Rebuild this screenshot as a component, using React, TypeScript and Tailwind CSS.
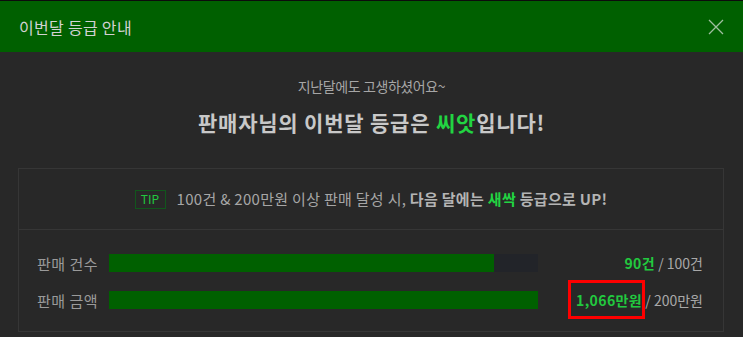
const font = { fontFamily: '"Noto Sans CJK KR", "Noto Sans", sans-serif' }

function ProgressRow({ label, pct, value, total, highlight }: { label: string; pct: number; value: string; total: string; highlight?: boolean }) {
  return (
    <div className="flex items-center h-[18px]">
      <div className="w-[72px] shrink-0 text-[15px] leading-none text-[#9a9a9a] tracking-[0.5px]">{label}</div>
      <div className="w-[429px] h-[18px] shrink-0 bg-[#222429]">
        <div className="h-full bg-[#006000]" style={{ width: `${pct}%` }} />
      </div>
      <div className="flex-1 text-right text-[14px] leading-none text-[#a8a8a8] whitespace-nowrap">
        <span className="relative font-bold text-[#22c93f] tracking-[0.4px]">
          {value}
          {highlight && <span className="absolute -left-[8px] -right-[3px] -top-[10px] -bottom-[9px] border-[3px] border-[#ff0000]" />}
        </span>
        <span> / {total}</span>
      </div>
    </div>
  )
}

export default function App() {
  return (
    <div className="w-[743px] h-[337px] overflow-hidden bg-[#282828] border-t border-[#0c0c0c]" style={font}>
      <div className="h-[51px] bg-[#006000] flex items-center justify-between pl-[19px] pr-[18px]">
        <span className="text-[16px] text-[#d2d2d2] tracking-[0.3px]">이번달 등급 안내</span>
        <svg width="16" height="16" viewBox="0 0 16 16" className="mr-[1px]">
          <path d="M1 1L15 15M15 1L1 15" stroke="#9fbf9f" strokeWidth="1.3" />
        </svg>
      </div>
      <div className="flex flex-col items-center pt-[25px]">
        <div className="text-[14px] leading-[18px] text-[#a6a6a6] tracking-[-0.4px]">지난달에도 고생하셨어요~</div>
        <div className="mt-[14px] text-[21px] leading-[26px] font-bold text-[#c8c8c8] tracking-[0.8px]">
          판매자님의 이번달 등급은 <span className="text-[#22d442]">씨앗</span>입니다!
        </div>
      </div>
      <div className="mx-[18px] mt-[33px] w-[706px] border border-[#363636]">
        <div className="h-[61px] flex items-center justify-center gap-[11px] border-b border-[#363636]">
          <span className="w-[31px] h-[19px] flex items-center justify-center border border-[#11561c] text-[12px] text-[#22c93f]">TIP</span>
          <span className="text-[15px] text-[#a6a6a6] tracking-[0.3px]">
            100건 &amp; 200만원 이상 판매 달성 시, <span className="font-semibold text-[#b4b4b4]">다음 달에는 </span>
            <span className="font-bold text-[#22d442]">새싹</span>
            <span className="font-semibold text-[#b4b4b4]"> 등급으로 UP!</span>
          </span>
        </div>
        <div className="flex flex-col gap-[19px] pl-[18px] pr-[20px] pt-[24px] pb-[22px]">
          <ProgressRow label="판매 건수" pct={89.7} value="90건" total="100건" />
          <ProgressRow label="판매 금액" pct={100} value="1,066만원" total="200만원" highlight />
        </div>
      </div>
    </div>
  )
}
